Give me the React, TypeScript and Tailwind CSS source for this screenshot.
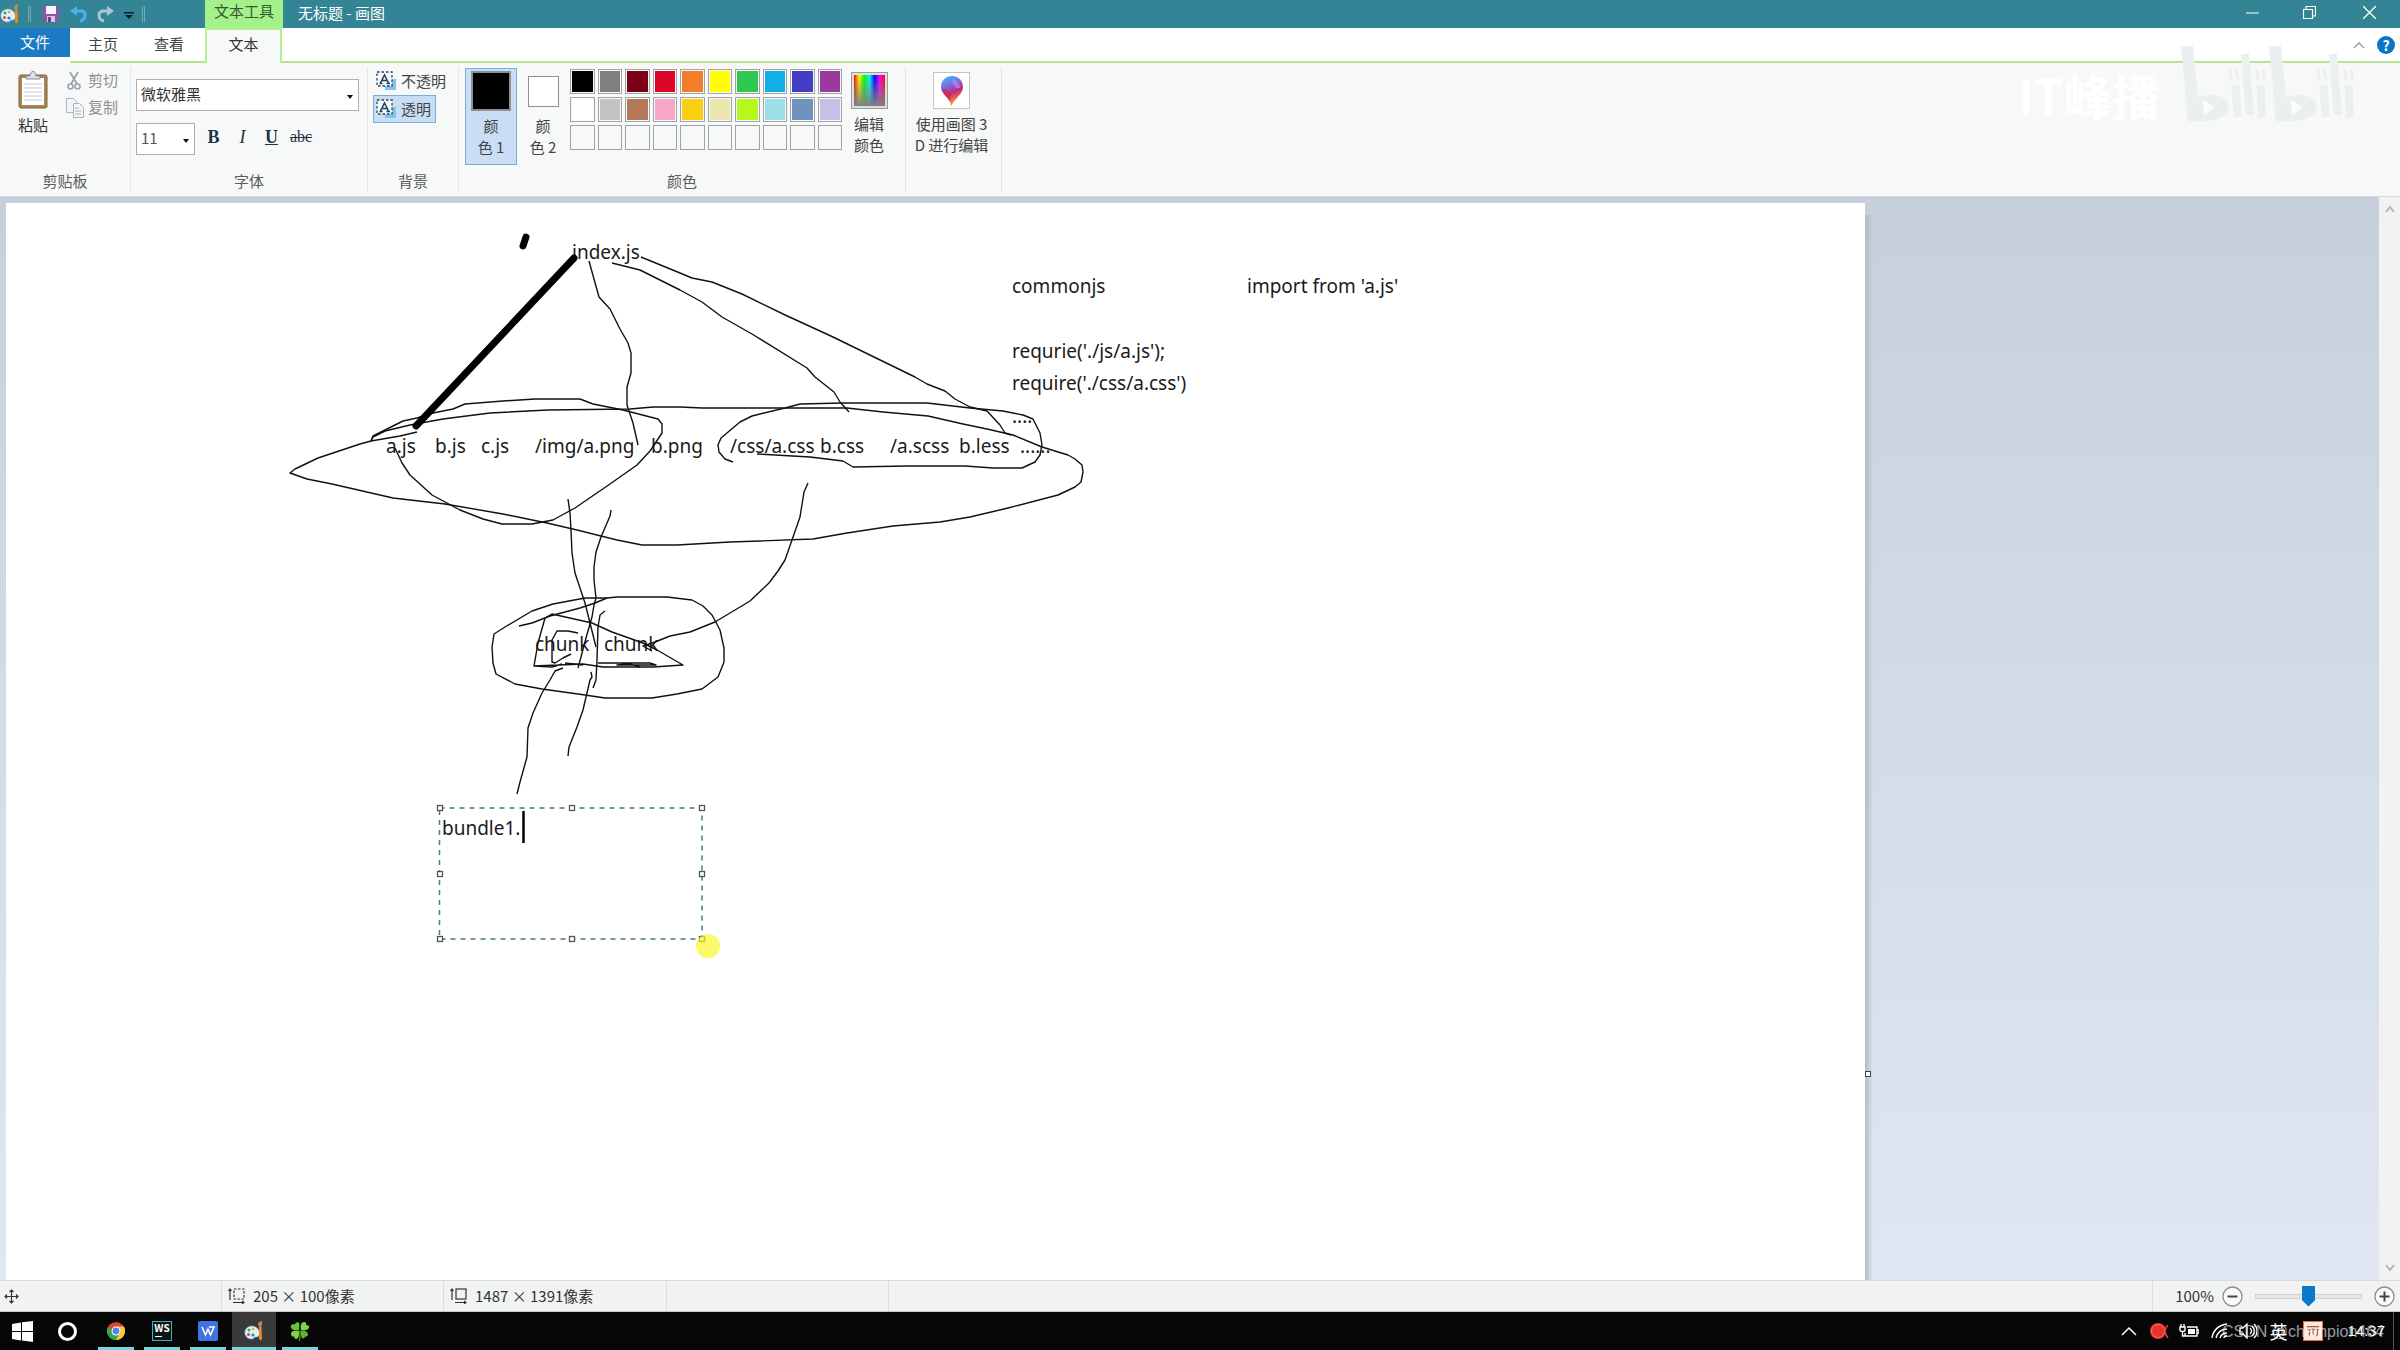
import type { ReactNode } from "react";

const paletteRows = [
  ["#000000", "#7f7f7f", "#7c0016", "#dc0628", "#f27d2a", "#ffff00", "#2fc850", "#12aee6", "#463dc6", "#9a3a9f"],
  ["#ffffff", "#c3c3c3", "#b4785a", "#f8a6c6", "#f8d011", "#ece7b0", "#b6f720", "#9be0e8", "#7092be", "#c8bfe7"],
  ["", "", "", "", "", "", "", "", "", ""],
];

// text dropped on the canvas, y is the baseline
const canvasTexts = [
  { x: 566, y: 56, text: "index.js" },
  { x: 380, y: 250, text: "a.js" },
  { x: 429, y: 250, text: "b.js" },
  { x: 475, y: 250, text: "c.js" },
  { x: 529, y: 250, text: "/img/a.png" },
  { x: 645, y: 250, text: "b.png" },
  { x: 724, y: 250, text: "/css/a.css" },
  { x: 814, y: 250, text: "b.css" },
  { x: 884, y: 250, text: "/a.scss" },
  { x: 953, y: 250, text: "b.less" },
  { x: 1014, y: 250, text: "......" },
  { x: 1006, y: 220, text: "...." },
  { x: 529, y: 448, text: "chunk" },
  { x: 598, y: 448, text: "chunk" },
  { x: 1006, y: 90, text: "commonjs" },
  { x: 1241, y: 90, text: "import from 'a.js'" },
  { x: 1006, y: 155, text: "requrie('./js/a.js');" },
  { x: 1006, y: 187, text: "require('./css/a.css')" },
];

// freehand pencil strokes
const strokes = [
  "589,261 599,297 610,309 620,329 628,343 631,353 631,373 627,387 627,405 633,423 638,445",
  "612,263 640,270 680,290 702,302 722,317 752,334 807,368 815,377 834,392 840,402 849,412",
  "641,257 680,273 692,278 712,282 742,294 783,314 833,337 915,377 927,384 945,391 955,399 970,407 987,411 1000,425 1005,433 1011,435",
  "371,441 373,436 403,421 417,418 433,413 453,409 465,404 503,401 535,399 580,399 593,404 623,410 658,419 662,424 662,433 650,451 637,465 610,484 575,508 553,520 532,524 502,524 483,519 460,510 432,495 410,475 402,463 395,448",
  "417,432 400,436 371,441 360,444 318,458 295,469 290,473 307,479 332,484 393,498 445,504 503,514 547,523 577,530 617,540 642,545 677,545 730,542 760,541 813,539 847,533 893,526 940,522 970,517 1008,508 1058,495 1075,487 1081,482 1083,472 1082,465 1075,459 1068,455 1042,447 1013,435 987,429 963,424 928,416 883,412 847,408 702,408 680,407 653,407 630,409 548,410 490,413 443,419 410,425 385,431 373,437 371,441",
  "733,462 725,459 719,452 718,445 721,438 740,422 752,416 785,408 800,404 843,403 927,403 970,408 1003,411 1023,415 1033,419 1040,433 1042,445 1040,455 1035,462 1022,468 993,468 965,466 907,466 853,467 843,461 810,457 757,454",
  "808,483 804,492 800,517 792,540 785,560 778,571 769,583 750,601 715,622 690,632 670,636 655,642 643,646 652,651",
  "568,499 570,513 571,530 572,553 575,573 585,603 590,623 596,647",
  "611,510 610,516 601,537 596,552 594,567 594,580 596,598 594,605 592,617 586,638 581,657 578,668",
  "519,626 532,623 550,616 580,608 595,603 607,598",
  "607,598 585,598 553,604 532,611 505,627 494,634 492,647 493,663 496,674 515,684 542,689 585,695 605,698 652,698 677,694 702,689 718,677 724,662 724,648 720,630 712,615 703,606 692,600 667,597 617,597 607,598",
  "534,666 538,643 545,618 552,614 592,623 612,632 643,643 657,650 683,665 653,667 603,667 583,664 534,666 552,667 562,664",
  "578,633 568,631 557,631 552,640 552,662 555,663 563,658 571,654",
  "605,611 600,615 598,627 597,660 596,680 593,688",
  "565,663 583,665",
  "598,663 650,663 656,665 617,665 630,664 640,667",
  "563,668 555,671 550,680 542,693 533,713 528,728 527,757 520,782 517,794",
  "591,672 592,677 590,680 583,710 577,727 569,747 568,756",
];

const handles = [
  [440, 808], [572, 808], [702, 808],
  [440, 874], [702, 874],
  [440, 939], [572, 939], [702, 939],
];

function PaletteIcon() {
  return (
    <svg viewBox="0 0 20 20" className="h-5 w-5">
      <path d="M8 5C3 5 0 9 1 13c1 4 4 5 7 5 2 0 2-2 4-2 3 0 4-2 3-6-1-3-4-5-7-5z" fill="#dff1f8" stroke="#6fa9c4" strokeWidth="0.6" />
      <circle cx="5" cy="9" r="1.5" fill="#47a44b" />
      <circle cx="9" cy="8" r="1.3" fill="#e5a72b" />
      <circle cx="4.500" cy="13.500" r="1.500" fill="#d6482f" />
      <circle cx="9" cy="14" r="1.600" fill="#2e7fc9" />
      <path d="M15 1l3-1v3l-1 3h-2l-1-3z" fill="#b98a56" />
      <path d="M15 6h2.500l.5 12-1.500 1.500L15 18z" fill="#e98828" />
    </svg>
  );
}

function TransparencyIcon() {
  return (
    <svg viewBox="0 0 21 20" className="h-5 w-[21px] shrink-0">
      <rect x="9" y="8" width="11" height="11" fill="#7fc4ee" />
      <rect x="1" y="1" width="15" height="14" fill="#f4f9fc" stroke="#33424c" strokeWidth="1.300" strokeDasharray="2.500 2" />
      <path d="M4.500 12L8.500 4l4 8M6 9.500h5M3.500 12.500h3M10.500 12.500h3.500" fill="none" stroke="#1f3f5c" strokeWidth="1.500" />
    </svg>
  );
}

function Group({ label, className, children }: { label?: string; className?: string; children: ReactNode }) {
  return (
    <section className={`flex shrink-0 flex-col border-r border-[#e2e6e6] ${className}`}>
      <div className="flex-1">{children}</div>
      <p className="h-5 text-center leading-[18px] text-[#5c5c5c]">{label}</p>
    </section>
  );
}

function Arrow() {
  return (
    <svg viewBox="0 0 6 4" className="pointer-events-none absolute top-1/2 right-1.5 h-1 w-1.5">
      <path d="M0 0h6L3 4z" fill="#111" />
    </svg>
  );
}

function TitleBar() {
  return (
    <header className="flex h-7 shrink-0 bg-[#338495] text-white">
      <div className="flex w-[205px] shrink-0 items-center">
        <PaletteIcon />
        <span className="ml-2 h-4 w-[3px] border-x border-[#76aab6]" />
        <button aria-label="保存" className="ml-[11px]">
          <svg viewBox="0 0 18 18" className="h-[18px] w-[18px]">
            <path d="M1 1h16v16H3l-2-2z" fill="#8a56a8" />
            <path d="M4 1h10v8H4z" fill="#fbf8fd" />
            <path d="M5 11h8v6H5z" fill="#d5c7df" />
            <path d="M6 12h3v5H6z" fill="#6c3b8c" />
          </svg>
        </button>
        <button aria-label="撤消" className="ml-2.5">
          <svg viewBox="0 0 18 18" className="h-[18px] w-[18px]">
            <path d="M5 6h6c3 0 4 2 4 4s-1 5-5 6" fill="none" stroke="#4bb0ee" strokeWidth="3" />
            <path d="M0 6l7-5v10z" fill="#4bb0ee" />
          </svg>
        </button>
        <button aria-label="重做" className="ml-2">
          <svg viewBox="0 0 18 18" className="h-[18px] w-[18px]">
            <path d="M13 6H8C4 6 3 8 3 10s1 5 5 6" fill="none" stroke="#a9c6d8" strokeWidth="3" />
            <path d="M18 6l-7-5v10z" fill="#a9c6d8" />
          </svg>
        </button>
        <button aria-label="自定义快速访问工具栏" className="ml-2.5">
          <svg viewBox="0 0 10 8" className="mt-1 h-2 w-2.5">
            <path d="M0 0h10v1.500H0zM1 3h8L5 7z" fill="#0d1c22" />
          </svg>
        </button>
        <span className="ml-2 h-4 w-[3px] border-x border-[#76aab6]" />
      </div>
      <div className="flex w-[78px] shrink-0 justify-center bg-[#a4f08a] leading-[22px] text-[#33582d]">文本工具</div>
      <h1 className="flex-1 pl-[15px] leading-[26px]">无标题 - 画图</h1>
      <div className="flex items-center pb-1">
        <button aria-label="最小化" className="flex w-[57px] justify-center">
          <svg viewBox="0 0 13 13" className="h-[13px] w-[13px]"><path d="M0 7h13" stroke="#fff" /></svg>
        </button>
        <button aria-label="还原" className="flex w-[57px] justify-center">
          <svg viewBox="0 0 13 13" className="h-[13px] w-[13px]">
            <path d="M.5 3.500h9v9h-9zM3 3V.5h9.500V10H10" fill="none" stroke="#fff" strokeWidth="1.200" />
          </svg>
        </button>
        <button aria-label="关闭" className="flex w-[62px] justify-center">
          <svg viewBox="0 0 13 13" className="h-[13px] w-[13px]"><path d="M0 0l13 13M13 0L0 13" stroke="#fff" strokeWidth="1.300" /></svg>
        </button>
      </div>
    </header>
  );
}

function Tabs() {
  return (
    <nav className="flex h-[35px] shrink-0 items-end bg-white text-[#444]">
      <button className="mb-1.5 h-[29px] w-[70px] bg-[#1b7ac4] text-white">文件</button>
      <div className="flex h-full w-[135px] border-b-2 border-[#b5e48f]">
        <button className="w-[66px]">主页</button>
        <button className="w-[66px]">查看</button>
      </div>
      <button className="h-full w-[77px] border-x-2 border-t-2 border-[#b5f08f] bg-[#f6f9f8] pb-1 text-[#333]">文本</button>
      <div className="flex h-full flex-1 items-center justify-end gap-3 border-b-2 border-[#b9e296] pr-[5px]">
        <button aria-label="折叠功能区">
          <svg viewBox="0 0 12 8" className="h-2 w-3"><path d="M1 7l5-5 5 5" fill="none" stroke="#a3a8ab" strokeWidth="1.600" /></svg>
        </button>
        <button aria-label="帮助" className="h-[18px] w-[18px] rounded-full bg-[#0a74c6] text-sm leading-[18px] font-bold text-white">?</button>
      </div>
    </nav>
  );
}

function Watermark() {
  return (
    <div className="pointer-events-none absolute top-11 right-10 flex items-end gap-5">
      <p className="text-5xl leading-[60px] font-bold text-white">IT峰播</p>
      <svg viewBox="2180 44 180 80" className="h-20 w-[180px] text-[#ecefef]" stroke="currentColor">
        {[0, 88].map((dx) => (
          <g key={dx} transform={`translate(${dx} 0)`}>
            <line x1="2187" y1="46" x2="2194" y2="121" strokeWidth="12" />
            <ellipse cx="2208" cy="108" rx="20" ry="12" transform="rotate(-8 2208 108)" fill="currentColor" strokeWidth="2" />
            <path d="M2203 100l12 7-11 8z" fill="#fbfdfc" stroke="none" />
            <line x1="2235" y1="85" x2="2238" y2="117" strokeWidth="8" />
            <line x1="2230" y1="70" x2="2232" y2="80" strokeWidth="3" />
            <line x1="2236" y1="69" x2="2238" y2="79" strokeWidth="3" />
            <line x1="2245" y1="54" x2="2250" y2="115" strokeWidth="8" />
            <line x1="2261" y1="85" x2="2262" y2="118" strokeWidth="8" />
            <line x1="2257" y1="70" x2="2258" y2="80" strokeWidth="3" />
            <line x1="2264" y1="70" x2="2264" y2="80" strokeWidth="3" />
          </g>
        ))}
      </svg>
    </div>
  );
}

function Ribbon() {
  return (
    <div className="flex h-[134px] shrink-0 border-b border-[#d3dbdc] bg-[#f6f9f8] py-1 text-[#444]">
      <Group label="剪贴板" className="w-[131px]">
        <div className="flex">
          <button className="flex w-[66px] flex-col items-center pt-1 text-[#333]">
            <svg viewBox="0 0 30 38" className="mb-1.5 h-[38px] w-[30px]">
              <rect x="1" y="4" width="28" height="33" rx="2" fill="#a98552" stroke="#7d6239" />
              <path d="M4 7h22v27H4z" fill="#fff" />
              <path d="M6 13h18M6 17h18M6 21h18M6 25h18M6 29h18" stroke="#c3cbd3" />
              <path d="M8 8V5h4c0-6 6-6 6 0h4v3z" fill="#e0e3e5" stroke="#858b90" />
            </svg>
            <span className="leading-5">粘贴</span>
          </button>
          <div className="text-[#8f8f8f]">
            <button className="flex h-[27px] items-center gap-1">
              <svg viewBox="0 0 18 20" className="h-5 w-[18px]">
                <path d="M4 1l7 12M12 1L5 13" stroke="#9aa3ad" strokeWidth="1.800" />
                <circle cx="4.500" cy="15.500" r="2.500" fill="none" stroke="#9aa3ad" strokeWidth="1.600" />
                <circle cx="11.500" cy="15.500" r="2.500" fill="none" stroke="#9aa3ad" strokeWidth="1.600" />
              </svg>
              剪切
            </button>
            <button className="flex h-[27px] items-center gap-1">
              <svg viewBox="0 0 18 20" className="h-5 w-[18px]" fill="#f3f5f8" stroke="#aab4c0">
                <path d="M.5.5h7l3 3v11H.500z" />
                <path d="M7.500 5.500h6l4 4v10h-10z" />
                <path d="M9 10h4M9 13h6M9 16h6" />
              </svg>
              复制
            </button>
          </div>
        </div>
      </Group>

      <Group label="字体" className="w-[237px]">
        <div className="pt-3 pr-2 pl-[5px]">
          <div className="relative">
            <select aria-label="字体系列" className="h-8 w-full appearance-none border border-[#abb1b3] bg-white px-1 pb-0.5 text-[#333]">
              <option>微软雅黑</option>
            </select>
            <Arrow />
          </div>
          <div className="mt-3 flex items-center">
            <div className="relative w-[59px]">
              <select aria-label="字号" className="h-8 w-full appearance-none border border-[#abb1b3] bg-white px-1 pb-0.5 text-[#555]">
                <option>11</option>
              </select>
              <Arrow />
            </div>
            <div className="flex items-center pb-1 pl-1 font-['Liberation_Serif',serif] text-lg leading-5 text-[#1e3446]">
              <button aria-label="粗体" className="w-[29px] font-bold">B</button>
              <button aria-label="斜体" className="w-[29px] italic">I</button>
              <button aria-label="下划线" className="w-[29px] font-bold underline">U</button>
              <button aria-label="删除线" className="w-[30px] text-base line-through">abc</button>
            </div>
          </div>
        </div>
      </Group>

      <Group label="背景" className="w-[91px]">
        <div className="pl-[5px]">
          <button className="flex h-7 items-center gap-1 border border-transparent px-0.5 whitespace-nowrap"><TransparencyIcon />不透明</button>
          <button className="flex h-7 items-center gap-1 border border-[#78aede] bg-[#c9def5] px-0.5 pr-1"><TransparencyIcon />透明</button>
        </div>
      </Group>

      <Group label="颜色" className="w-[447px]">
        <div className="flex pt-px pl-1.5">
          <button className="flex h-[97px] w-[52px] flex-col items-center border border-[#78aede] bg-[#c9def5] pt-0.5 leading-[21px]">
            <span className="mb-1 h-10 w-10 border-2 border-[#8d8f91] bg-black" />
            <span>颜<br />色 1</span>
          </button>
          <button className="flex h-[97px] w-[52px] flex-col items-center pt-2 leading-[21px]">
            <span className="mb-2 h-[31px] w-[31px] border border-[#8d8f91] bg-white" />
            <span>颜<br />色 2</span>
          </button>
          <div className="ml-px grid w-[272px] grid-cols-10 content-start gap-[3px] pt-px">
            {paletteRows.flat().map((color, i) => (
              <button key={i} aria-label={`颜色 ${i + 1}`} className="h-[25px] border border-[#a0a4a6] bg-[#f6f9f8] p-px">
                <span className="block h-full" style={{ backgroundColor: color || undefined }} />
              </button>
            ))}
          </div>
          <button className="ml-px flex w-[52px] flex-col items-center pt-1 leading-[21px]">
            <span className="mb-1 h-[37px] w-[37px] border border-[#9a9d9f] bg-[#dedede] p-0.5">
              <span className="block h-full bg-[linear-gradient(to_top,#808080,transparent),linear-gradient(to_right,#f00,#ff0,#0f0,#0ff,#00f,#f0f,#f00)]" />
            </span>
            <span>编辑<br />颜色</span>
          </button>
        </div>
      </Group>

      <Group className="w-24">
        <button className="flex w-[91px] flex-col items-center pt-[5px] leading-[21px]">
          <span className="mb-1 flex h-[37px] w-[37px] items-center justify-center border border-[#c3c6c8] bg-white">
            <svg viewBox="0 0 24 32" className="h-8 w-6">
              <defs>
                <linearGradient id="drop" x1="0" y1="0" x2="0.300" y2="1">
                  <stop offset="0" stopColor="#35c5f2" />
                  <stop offset="0.400" stopColor="#7c6be0" />
                  <stop offset="0.650" stopColor="#c52a78" />
                  <stop offset="1" stopColor="#f2a02c" />
                </linearGradient>
              </defs>
              <path d="M12 1c7 0 11 5 11 11 0 7-7 10-12 19-1-5-3-8-6-11-3-3-4-5-4-8C1 6 5 1 12 1z" fill="url(#drop)" />
              <path d="M12 4c4 0 8 4 8 9-4 1-8-3-8-9z" fill="#b784f2" opacity="0.700" />
              <path d="M2 14c4-1 8 3 9 9l-2 3c-1-4-6-5-7-12z" fill="#d9255b" opacity="0.800" />
            </svg>
          </span>
          <span>使用画图 3<br />D 进行编辑</span>
        </button>
      </Group>
    </div>
  );
}

function Canvas() {
  return (
    <div className="relative h-[1739px] w-[1859px] shrink-0 bg-white">
      {canvasTexts.map((t, i) => (
        <p
          key={i}
          className="absolute font-['Noto_Sans',sans-serif] text-[19px] leading-8 whitespace-pre text-[#1a1a1a]"
          style={{ left: t.x, top: t.y - 23 }}
        >
          {t.text}
        </p>
      ))}
      <textarea
        aria-label="文本框"
        spellCheck={false}
        defaultValue="bundle1."
        className="absolute top-[609px] left-[435px] h-[125px] w-[258px] resize-none bg-transparent pl-px font-['Noto_Sans',sans-serif] text-[19px] leading-8 text-[#1a1a1a] outline-none"
      />
      <svg viewBox="6 203 1859 1739" className="pointer-events-none absolute inset-0 h-full w-full" fill="none" stroke="#111">
        {strokes.map((points, i) => (
          <polyline key={i} points={points} strokeWidth="1.400" strokeLinejoin="round" />
        ))}
        <path d="M574 258L416 426M526 237l-3 9" stroke="#000" strokeWidth="7" strokeLinecap="round" />
        <rect x="439.500" y="808" width="262.500" height="131" stroke="#3f7f86" strokeWidth="1.500" strokeDasharray="5 5" />
        {handles.map(([x, y]) => (
          <rect key={`${x}-${y}`} x={x - 2.5} y={y - 2.5} width="5" height="5" fill="#fff" stroke="#555" strokeWidth="1.300" />
        ))}
        <path d="M523.500 811v32" stroke="#000" strokeWidth="2.500" />
        <circle cx="708" cy="946" r="12" fill="#f7f72a" fillOpacity="0.700" stroke="none" />
      </svg>
      <div className="absolute top-3 -right-2 bottom-0 w-2 bg-linear-to-r from-[#b3bac8] to-transparent" />
      <span className="absolute top-[868px] -right-1.5 h-1.5 w-1.5 border border-[#444] bg-white" />
    </div>
  );
}

function StatusBar() {
  return (
    <div className="flex h-8 shrink-0 border-t border-b border-t-[#d7dadb] border-b-[#c9cccc] bg-[#f1f2f2] leading-8 text-[#333]">
      <div className="flex w-[222px] items-center border-r border-[#d9dcdc] pl-1">
        <svg viewBox="0 0 15 15" className="h-[15px] w-[15px]" fill="none" stroke="#333" strokeWidth="1.200">
          <path d="M7.500 1v13M1 7.500h13M5.500 3l2-2 2 2M5.500 12l2 2 2-2M3 5.500l-2 2 2 2M12 5.500l2 2-2 2" />
        </svg>
      </div>
      <div className="flex w-[222px] items-center gap-2 border-r border-[#d9dcdc] pl-1.5">
        <svg viewBox="0 0 17 16" className="h-4 w-[17px]" fill="none" stroke="#333" strokeWidth="1.200">
          <path d="M2 1v11M.5 3L2 1l1.500 2M5 14.500h11M14 13l2 1.500-2 1.500" />
          <rect x="6" y="1" width="10" height="10" strokeDasharray="2.500 1.500" />
        </svg>
        205 × 100像素
      </div>
      <div className="flex w-[223px] items-center gap-2 border-r border-[#d9dcdc] pl-1.5">
        <svg viewBox="0 0 17 16" className="h-4 w-[17px]" fill="none" stroke="#333" strokeWidth="1.200">
          <path d="M2 1v11M.5 3L2 1l1.500 2M5 14.500h11M14 13l2 1.500-2 1.500" />
          <rect x="6" y="1" width="10" height="10" />
        </svg>
        1487 × 1391像素
      </div>
      <div className="w-[222px] border-r border-[#d9dcdc]" />
      <div className="flex-1" />
      <div className="flex items-center border-l border-[#d9dcdc] pr-[5px] pl-[22px]">
        <label htmlFor="zoom">100%</label>
        <button aria-label="缩小" className="ml-2">
          <svg viewBox="0 0 21 21" className="h-[21px] w-[21px]">
            <circle cx="10.500" cy="10.500" r="9.500" fill="#fafafa" stroke="#8a8d8f" strokeWidth="1.300" />
            <path d="M5.500 10.500h10" stroke="#444" strokeWidth="2" />
          </svg>
        </button>
        <input
          id="zoom"
          type="range"
          min="0"
          max="100"
          defaultValue="50"
          className="mx-3 h-[21px] w-[107px] appearance-none bg-transparent [&::-webkit-slider-runnable-track]:h-[5px] [&::-webkit-slider-runnable-track]:border [&::-webkit-slider-runnable-track]:border-[#d0d3d3] [&::-webkit-slider-runnable-track]:bg-[#e4e6e6] [&::-webkit-slider-thumb]:-mt-[9px] [&::-webkit-slider-thumb]:h-[21px] [&::-webkit-slider-thumb]:w-[13px] [&::-webkit-slider-thumb]:appearance-none [&::-webkit-slider-thumb]:bg-[#0a79cc] [&::-webkit-slider-thumb]:[clip-path:polygon(0_0,100%_0,100%_70%,50%_100%,0_70%)]"
        />
        <button aria-label="放大">
          <svg viewBox="0 0 21 21" className="h-[21px] w-[21px]">
            <circle cx="10.500" cy="10.500" r="9.500" fill="#fafafa" stroke="#8a8d8f" strokeWidth="1.300" />
            <path d="M5.500 10.500h10M10.500 5.500v10" stroke="#444" strokeWidth="2" />
          </svg>
        </button>
      </div>
    </div>
  );
}

const taskApps: { name: string; active?: boolean; icon: ReactNode }[] = [
  {
    name: "Chrome",
    icon: (
      <svg viewBox="0 0 20 20" className="h-[18px] w-[18px]">
        <circle cx="10" cy="10" r="10" fill="#e34133" />
        <path d="M1.300 5L10 20A10 10 0 0 1 1.300 5z" fill="#2da94f" />
        <path d="M1.300 5l5 9L10 20l5-8-9-2z" fill="#2da94f" />
        <path d="M18.700 5A10 10 0 0 1 10 20l5-9-5-6z" fill="#fcc934" />
        <circle cx="10" cy="10" r="5" fill="#fff" />
        <circle cx="10" cy="10" r="3.800" fill="#4a86e8" />
      </svg>
    ),
  },
  {
    name: "WebStorm",
    icon: (
      <span className="block h-5 w-5 border border-[#2bb8c4] bg-[#101414] text-center text-[10px] leading-3 font-bold text-white">
        WS
        <span className="mt-0.5 ml-0.5 block h-px w-[7px] bg-white" />
      </span>
    ),
  },
  {
    name: "WPS",
    icon: (
      <svg viewBox="0 0 20 20" className="h-5 w-5">
        <rect width="20" height="20" rx="2" fill="#3f74e0" />
        <path d="M4 6l3.500 8L10 8l2.500 6L16 6h-5" fill="none" stroke="#fff" strokeWidth="1.600" />
      </svg>
    ),
  },
  { name: "画图", active: true, icon: <PaletteIcon /> },
  {
    name: "Clover",
    icon: (
      <svg viewBox="0 0 20 20" className="h-5 w-5">
        <path d="M9 9C4 10 0 8 1 4.500 2 3 4 3 5 3.500 5 1 9 0 9.500 3z" fill="#6cc23a" />
        <path d="M11 9C10 5 11 1 14 1c2 0 2.500 1.500 2 3 2 0 4 1 3 3-1 2-5 3-8 2z" fill="#7fd04a" />
        <path d="M9 10c-5-1-8 0-8 3 0 2 1.500 3 3 2.500C4.500 18 6 18.500 7.500 17.500 9 16 9.500 13 9 10z" fill="#7fd04a" />
        <path d="M11 10c4-1 7 1 7 3.500 0 1.500-1 2.500-3 2 0 2-2 2.500-3 1.500-1.500-2-1.500-5-1-7z" fill="#5cb531" />
        <path d="M10 9c0 4 .5 7-1 11" fill="none" stroke="#3f8a22" strokeWidth="1.500" />
      </svg>
    ),
  },
];

function Taskbar() {
  return (
    <footer className="relative flex h-[38px] shrink-0 bg-[#060606] text-white">
      <button aria-label="开始" className="flex w-[45px] items-center justify-center">
        <svg viewBox="0 0 21 21" className="h-[21px] w-[21px]" fill="#fff">
          <path d="M0 3l9-1.500V10H0zM10 1.300L21 0v10H10zM0 11h9v8.500L0 18zM10 11h11v10l-11-1.500z" />
        </svg>
      </button>
      <button aria-label="Cortana" className="flex w-[45px] items-center justify-center">
        <span className="h-[19px] w-[19px] rounded-full border-[3px] border-white" />
      </button>
      <div className="flex pl-[3px]">
        {taskApps.map((app) => (
          <button
            key={app.name}
            aria-label={app.name}
            className={app.active ? "relative flex w-[46px] items-center justify-center border-x border-[#060606] bg-[#3a3a3a]" : "relative flex w-[46px] items-center justify-center"}
          >
            {app.icon}
            <span className={app.active ? "absolute inset-x-0 bottom-0 h-[3px] bg-[#77d5e3]" : "absolute inset-x-[5px] bottom-0 h-[3px] bg-[#77d5e3]"} />
          </button>
        ))}
      </div>
      <div className="flex-1" />
      <div className="flex items-center pr-1.5">
        <svg viewBox="0 0 16 10" className="mr-3 h-2.5 w-4"><path d="M1 9l7-7 7 7" fill="none" stroke="#fff" strokeWidth="1.500" /></svg>
        <svg viewBox="0 0 20 18" className="mr-2.5 h-[18px] w-5">
          <circle cx="9" cy="9" r="8" fill="#e6322e" />
          <circle cx="9" cy="9" r="6.500" fill="none" stroke="#ff8a80" strokeWidth="0.700" />
          <path d="M19 3c-4 4-4 8 0 13" fill="none" stroke="#d8433c" strokeWidth="1.500" />
        </svg>
        <svg viewBox="0 0 20 14" className="mr-3 h-3.5 w-5" fill="none" stroke="#fff" strokeWidth="1.400">
          <path d="M8 3h10v9H6V9M18 6h2v3h-2M1 3h5v3c0 2-5 2-5 0zM2 3V0M5 3V0M3.500 8v4H6" />
          <path d="M9 5h7v5H9z" fill="#fff" stroke="none" />
        </svg>
        <svg viewBox="0 0 18 16" className="mr-2.5 h-4 w-[18px]" fill="none" stroke="#fff" strokeWidth="1.400">
          <path d="M1 15C2 7 8 2 16 1M5 15c1-5 5-9 11-9M9 15c1-3 3-5 7-5M13 15c0-1 1-2 3-2" />
        </svg>
        <svg viewBox="0 0 18 16" className="mr-3 h-4 w-[18px]" fill="none" stroke="#fff" strokeWidth="1.300">
          <path d="M1 5h3l4-4v14l-4-4H1zM11 5c2 2 2 4 0 6M13 3c3 3 3 7 0 10M15 1c4 4 4 10 0 14" />
        </svg>
        <span className="mr-4 text-lg">英</span>
        <span className="mr-6 block h-5 w-5 border border-[#f06a3c] bg-[#fbe9de] p-0.5">
          <svg viewBox="0 0 16 16" className="h-full w-full" fill="none" stroke="#a85a3c" strokeWidth="1.400">
            <path d="M1 3h14M1 6h14M4 6v8M8 6v6M13 6v6l-2 2" />
          </svg>
        </span>
        <time className="font-['Liberation_Sans',sans-serif]">14:37</time>
        <span className="ml-2 h-full border-l border-[#555]" />
      </div>
      <p className="pointer-events-none absolute top-2 right-4 font-['Liberation_Sans',sans-serif] text-base leading-6 text-white/60">CSDN @champion464</p>
    </footer>
  );
}

export default function App() {
  return (
    <div className="relative flex h-screen flex-col overflow-hidden font-['Noto_Sans_CJK_SC',sans-serif] text-[15px]">
      <TitleBar />
      <Tabs />
      <Ribbon />
      <main className="flex min-h-0 flex-1">
        <div className="flex flex-1 overflow-hidden bg-linear-to-b from-[#c6d0dc] to-[#e0e7f2] pt-1.5 pl-1.5">
          <Canvas />
        </div>
        <div className="flex w-[21px] shrink-0 flex-col items-center justify-between bg-[#f1f2f2] py-2">
          <svg viewBox="0 0 10 8" className="h-2 w-2.5"><path d="M1 7l4-5 4 5" fill="none" stroke="#b0b3b5" strokeWidth="2" /></svg>
          <svg viewBox="0 0 10 8" className="h-2 w-2.5"><path d="M1 1l4 5 4-5" fill="none" stroke="#b0b3b5" strokeWidth="2" /></svg>
        </div>
      </main>
      <StatusBar />
      <Taskbar />
      <Watermark />
    </div>
  );
}
